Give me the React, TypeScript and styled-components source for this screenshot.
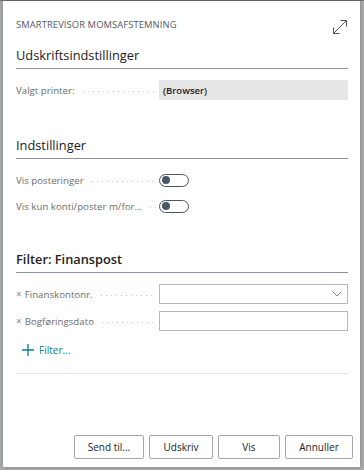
import React, {FC} from 'react';
import styled, {createGlobalStyle} from 'styled-components';

const GlobalStyle = createGlobalStyle`
  html, body {
    margin: 0;
    padding: 0;
    background: #a9acab;
    font-family: "Open Sans", "Noto Sans", sans-serif;
  }
`

const Backdrop = styled.div`
  width: 364px;
  height: 470px;
  padding: 0 4px 3px 3px;
  box-sizing: border-box;
  border-top: 1px solid #6f6f6f;
`

const Dialog = styled.div`
  height: 100%;
  background: #fff;
  display: flex;
  flex-direction: column;
  padding: 0 12px 0 13px;
  box-sizing: border-box;
  box-shadow: 0 0 4px rgba(0, 0, 0, 0.25);
`

const TitleBar = styled.div`
  display: flex;
  align-items: center;
  justify-content: space-between;
  height: 42px;
  padding-top: 2px;
`

const Title = styled.div`
  font-size: 9.4px;
  letter-spacing: 0.1px;
  color: #505a67;
  text-transform: uppercase;
`

const ExpandButton = styled.div`
  width: 16px;
  height: 16px;
  margin-top: 4px;
  color: #505050;
`

const Section = styled.div<{$gap: number}>`
  margin-bottom: ${p => p.$gap}px;
`

const SectionHeader = styled.div<{$bold?: boolean}>`
  font-size: 12.8px;
  font-weight: ${p => (p.$bold ? 600 : 400)};
  color: #212121;
  padding-bottom: 3px;
  border-bottom: 1.5px solid #8d93a6;
  line-height: 20px;
  margin-bottom: 11px;
`

const Row = styled.div`
  display: grid;
  grid-template-columns: 143px 1fr;
  align-items: center;
  height: 20px;
  margin-bottom: 7px;
`

const Label = styled.div`
  display: flex;
  align-items: center;
  font-size: 9.7px;
  color: #6d6d6d;
  white-space: nowrap;
  overflow: hidden;
  padding-right: 3px;

  &::after {
    content: "";
    flex: 1;
    margin-left: 6px;
    height: 1px;
    background-image: radial-gradient(circle, #c4c4c4 0.6px, transparent 0.7px);
    background-size: 5px 2px;
    background-repeat: repeat-x;
    align-self: center;
    margin-top: 3px;
  }
`

const Remove = styled.span`
  color: #8a8a8a;
  font-size: 10px;
  margin-right: 3px;
`

const ReadOnlyValue = styled.div`
  height: 20px;
  background: #e6e6e6;
  font-size: 9.5px;
  font-weight: 600;
  color: #222;
  display: flex;
  align-items: center;
  padding-left: 4px;
`

const InputBox = styled.div`
  height: 20px;
  border: 1px solid #b7b7b7;
  box-sizing: border-box;
  display: flex;
  align-items: center;
  justify-content: flex-end;
  padding-right: 5px;
  color: #8a8a8a;
`

const Toggle = styled.div`
  width: 30px;
  height: 13px;
  border: 1.2px solid #4b5568;
  border-radius: 7px;
  box-sizing: border-box;
  display: flex;
  align-items: center;
  padding-left: 2px;

  &::before {
    content: "";
    width: 8px;
    height: 8px;
    border-radius: 50%;
    background: #4b5568;
  }
`

const ToggleRow = styled(Row)`
  margin-bottom: 6px;
`

const AddFilter = styled.div`
  display: flex;
  align-items: center;
  gap: 5px;
  color: #00838a;
  font-size: 10px;
  padding-left: 6px;
  margin-top: 9px;
  height: 20px;
`

const Divider = styled.div`
  border-top: 1.5px solid #e3e3e3;
  margin-top: 13px;
`

const Footer = styled.div`
  margin-top: auto;
  display: flex;
  justify-content: flex-end;
  gap: 5px;
  margin-right: -5px;
  margin-bottom: 8px;
`

const Button = styled.button<{$width: number}>`
  width: ${p => p.$width}px;
  height: 24px;
  background: #fff;
  border: 1px solid #a6a6a6;
  border-radius: 2px;
  font-family: "Open Sans", "Noto Sans", sans-serif;
  font-size: 10px;
  color: #222;
  padding: 0;
`

const Chevron: FC = () => (
    <svg width="10" height="6" viewBox="0 0 10 6" fill="none">
        <path d="M0.5 0.5 L5 5 L9.5 0.5" stroke="#7a7a7a" strokeWidth="0.9"/>
    </svg>
)

const App: FC = () => {
    return (
        <>
            <GlobalStyle/>
            <Backdrop>
                <Dialog>
                    <TitleBar>
                        <Title>Smartrevisor Momsafstemning</Title>
                        <ExpandButton>
                            <svg width="16" height="16" viewBox="0 0 16 16" fill="none" stroke="#555" strokeWidth="1">
                                <path d="M1.5 14.5 L14.5 1.5"/>
                                <path d="M8.5 1.5 H14.5 V7.5"/>
                                <path d="M1.5 8.5 V14.5 H7.5"/>
                            </svg>
                        </ExpandButton>
                    </TitleBar>

                    <Section $gap={28}>
                        <SectionHeader>Udskriftsindstillinger</SectionHeader>
                        <Row>
                            <Label>Valgt printer:</Label>
                            <ReadOnlyValue>(Browser)</ReadOnlyValue>
                        </Row>
                    </Section>

                    <Section $gap={27}>
                        <SectionHeader>Indstillinger</SectionHeader>
                        <ToggleRow>
                            <Label>Vis posteringer</Label>
                            <Toggle/>
                        </ToggleRow>
                        <ToggleRow>
                            <Label>Vis kun konti/poster m/for...</Label>
                            <Toggle/>
                        </ToggleRow>
                    </Section>

                    <Section $gap={0}>
                        <SectionHeader $bold>Filter: Finanspost</SectionHeader>
                        <Row>
                            <Label><Remove>×</Remove>Finanskontonr.</Label>
                            <InputBox><Chevron/></InputBox>
                        </Row>
                        <Row>
                            <Label><Remove>×</Remove>Bogføringsdato</Label>
                            <InputBox/>
                        </Row>
                        <AddFilter>
                            <svg width="12" height="12" viewBox="0 0 12 12" stroke="#00838a" strokeWidth="1.3">
                                <path d="M6 0 V12 M0 6 H12"/>
                            </svg>
                            Filter...
                        </AddFilter>
                        <Divider/>
                    </Section>

                    <Footer>
                        <Button $width={70}>Send til...</Button>
                        <Button $width={64}>Udskriv</Button>
                        <Button $width={62}>Vis</Button>
                        <Button $width={68}>Annuller</Button>
                    </Footer>
                </Dialog>
            </Backdrop>
        </>
    );
};

export default App;
